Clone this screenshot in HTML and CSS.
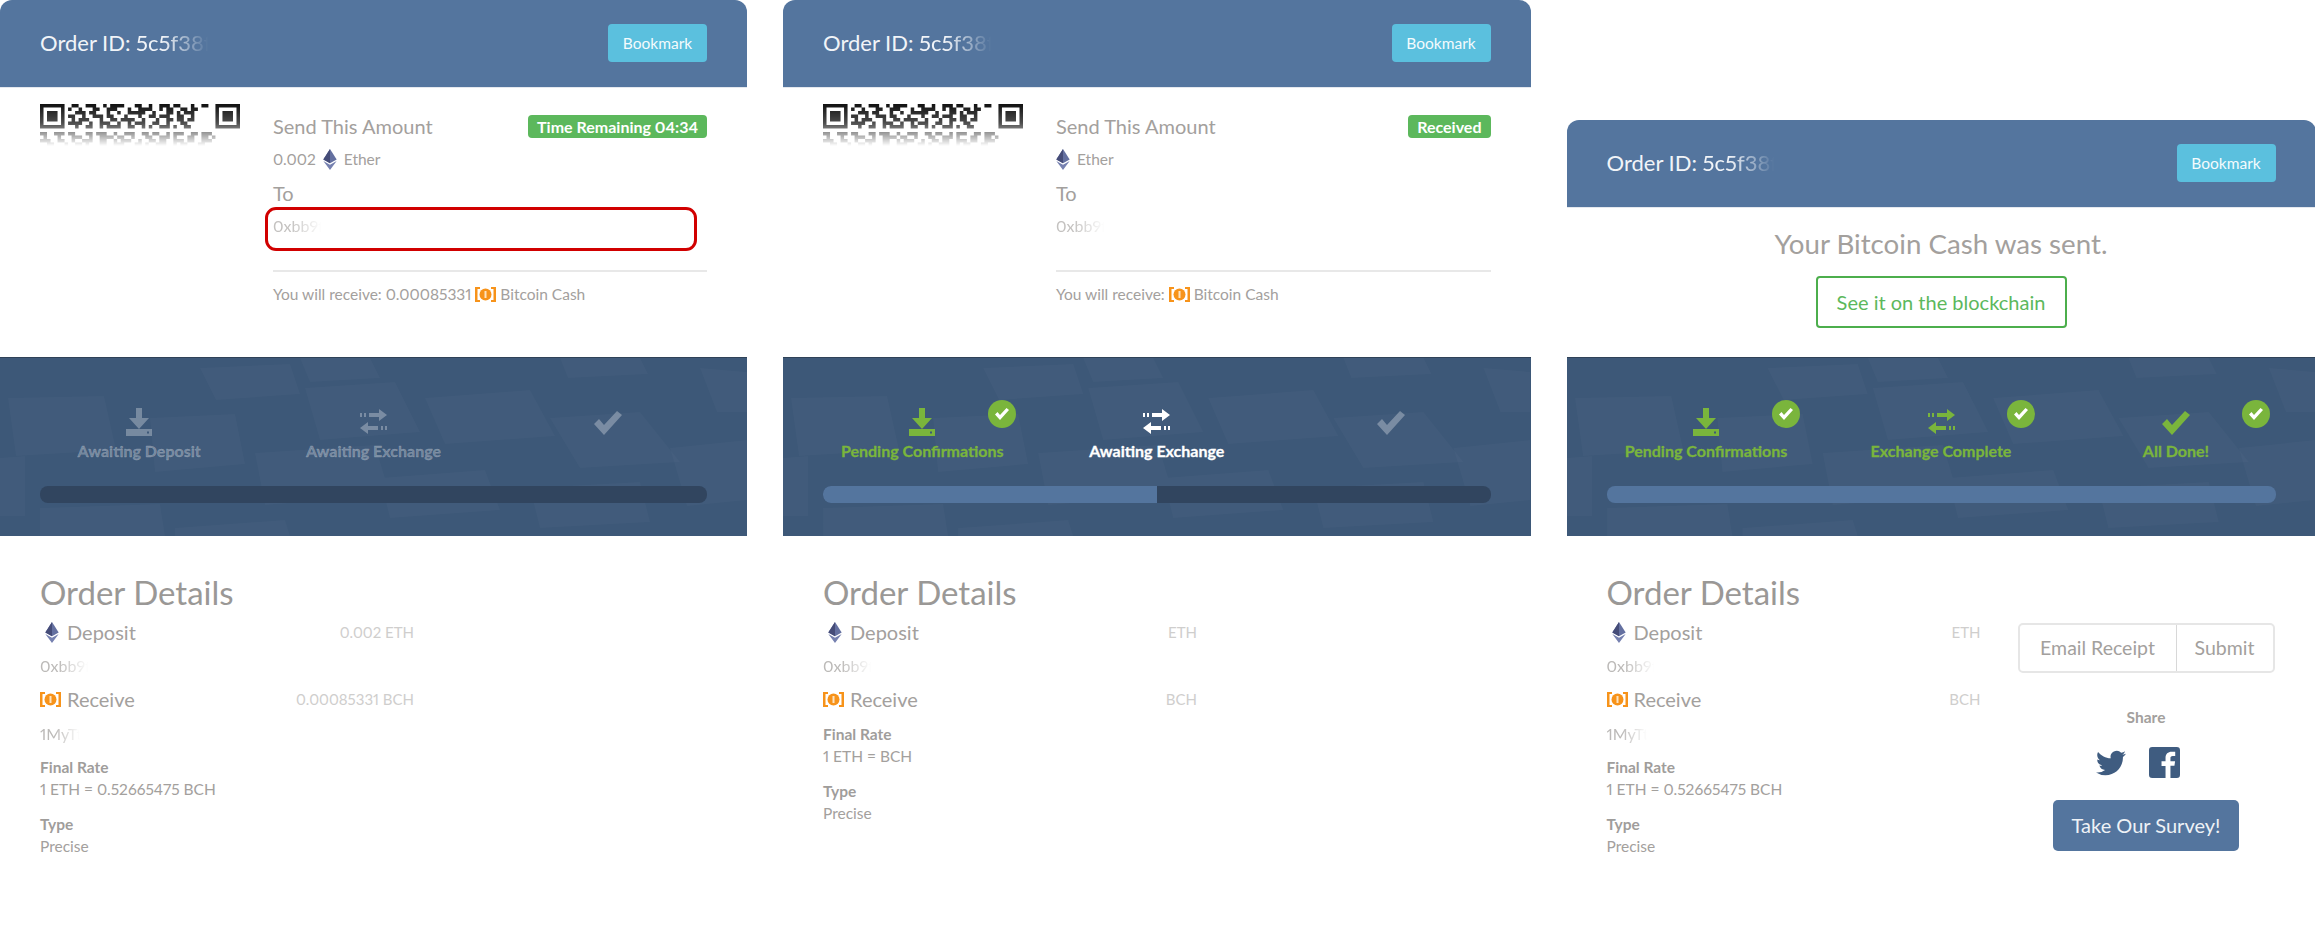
FILE: index.html
```html
<!DOCTYPE html>
<html lang="en">
<head>
  <meta charset="UTF-8">
  <title>Order status</title>
  <link rel="stylesheet" href="styles.css">
</head>
<body>
  <!-- shared icons -->
  <svg class="defs" aria-hidden="true">
    <symbol id="i-download" viewBox="0 0 26 28"><path fill-rule="evenodd" d="M10 0h6v10h7L13 21 3 10h7zM0 21h7l6 0 6 0h7v7H0zM21 23.5h2v2h-2z"/></symbol>
    <symbol id="i-exchange" viewBox="0 0 27 25"><path d="M9 4h10V0l8 6-8 6V8H9zM0 4h2v4H0zM4 4h2v4H4zM18 17H8v-4l-8 6 8 6v-4h10zM21 17h2v4h-2zM25 17h2v4h-2z"/></symbol>
    <symbol id="i-check" viewBox="0 0 28 24"><path d="M0 13l5-5 5 6L23 0l5 4L10 24z"/></symbol>
    <symbol id="i-eth" viewBox="0 0 14 22"><path fill="#6470a0" d="M7 0l7 11-7 4-7-4z"/><path fill="#454c78" d="M7 0v15l-7-4z"/><path fill="#7681b0" d="M0 12.6l7 4 7-4-7 9.4z"/></symbol>
    <symbol id="i-bch" viewBox="0 0 21 15"><path fill="#f7931a" d="M0 0h5v2H2.500v11H5v2H0zM21 0h-5v2h2.500v11H16v2h5z"/><circle cx="10.500" cy="7.500" r="6" fill="#f7931a"/><path fill="#fde3c0" d="M9.500 4h2v7h-2z"/></symbol>
    <symbol id="i-twitter" viewBox="0 0 24 24"><path d="M23.953 4.57a10 10 0 01-2.825.775 4.958 4.958 0 002.163-2.723c-.951.555-2.005.959-3.127 1.184a4.92 4.92 0 00-8.384 4.482C7.69 8.095 4.067 6.13 1.64 3.162a4.822 4.822 0 00-.666 2.475c0 1.71.87 3.213 2.188 4.096a4.904 4.904 0 01-2.228-.616v.06a4.923 4.923 0 003.946 4.827 4.996 4.996 0 01-2.212.085 4.936 4.936 0 004.604 3.417 9.867 9.867 0 01-6.102 2.105c-.39 0-.779-.023-1.17-.067a13.995 13.995 0 007.557 2.209c9.053 0 13.998-7.496 13.998-13.985 0-.21 0-.42-.015-.63A9.935 9.935 0 0024 4.59z"/></symbol>
    <symbol id="i-facebook" viewBox="0 0 24 24"><path d="M21.500 0h-19A2.500 2.500 0 000 2.500v19A2.500 2.500 0 002.500 24h10.300v-9.300H9.700v-3.600h3.100V8.400c0-3.100 1.900-4.800 4.700-4.800 1.300 0 2.500.1 2.800.1v3.200h-1.900c-1.500 0-1.800.7-1.800 1.800v2.300h3.600l-.5 3.600h-3.100V24h4.900a2.500 2.500 0 002.500-2.500v-19A2.500 2.500 0 0021.500 0z"/></symbol>
    <symbol id="i-qr" viewBox="0 0 57 12" preserveAspectRatio="none">
      <path fill="#111" fill-rule="evenodd" d="M0 0h7v7H0zM1 1v5h5V1zM2 2h3v3H2zM50 0h7v7h-7zM51 1v5h5V1zM52 2h3v3h-3z"/>
      <path fill="none" stroke="#111" d="M9 .5h2m2 0h3m2 0h1m1 0h4m3 0h2m2 0h1m2 0h3m1 0h2m3 0h1m2 0h2
        M8 1.500h1m2 0h1m3 0h2m2 0h3m3 0h1m2 0h4m2 0h1m1 0h2m2 0h2m1 0h2
        M10 2.500h3m1 0h2m3 0h1m2 0h1m2 0h5m2 0h1m3 0h2m1 0h1m1 0h3
        M8 3.500h2m2 0h1m2 0h3m1 0h2m3 0h1m3 0h1m2 0h2m1 0h3m2 0h2m2 0h1
        M9 4.500h1m1 0h3m3 0h1m2 0h2m1 0h4m2 0h1m3 0h1m2 0h2m1 0h2m1 0h2
        M8 5.500h4m2 0h1m2 0h3m2 0h1m2 0h1m1 0h3m2 0h2m2 0h1m3 0h2
        M10 6.500h1m2 0h2m2 0h1m1 0h4m2 0h2m2 0h1m1 0h1m2 0h3m1 0h1m2 0h2
        M0 8.500h2m2 0h3m1 0h2m3 0h2m1 0h3m2 0h1m2 0h3m2 0h2m1 0h2m2 0h1m1 0h3m2 0h2m1 0h3
        M1 9.500h1m3 0h1m3 0h3m2 0h1m2 0h4m1 0h2m2 0h1m3 0h2m2 0h3m1 0h1m3 0h2m2 0h2m1 0h1
        M0 10.500h3m2 0h2m2 0h1m2 0h3m2 0h2m2 0h1m1 0h3m2 0h1m2 0h2m1 0h2m2 0h3m1 0h2m2 0h3
        M2 11.500h2m3 0h1m2 0h2m1 0h1m3 0h2m2 0h3m3 0h2m1 0h1m2 0h3m2 0h1m1 0h2m3 0h2"/>
    </symbol>
    <symbol id="i-texture" viewBox="0 0 747 178" preserveAspectRatio="none">
      <path d="M8 40l96-2 12 54-100 6zM200 10l90-4 10 30-84 6zM305 30l90-6 25 50-100 8zM425 40l105-8 25 46-110 8zM550 60l90-6 40 50-100 6zM700 10l47 4v40l-30 0z"/>
      <path d="M150 60l85-4 10 50-90 8zM255 95l120-8 15 50-125 10zM380 120l105-8 15 40-110 8zM530 130l110-6 10 40-110 6zM670 90l77-8v60l-60 6zM0 100l25-2v60H0z"/>
      <path d="M40 150l120-4 5 32H40zM175 170l110-8 5 16H175zM300 0l70 0 10 20-70 4zM560 0l80 0 8 16-80 4z"/>
    </symbol>
  </svg>

  <main class="page">

    <!-- waiting for deposit -->
    <section class="panel">
      <header class="panel-head">
        <span class="order-id">Order ID: <span class="fade">5c5f38f</span></span>
        <a class="btn-bookmark">Bookmark</a>
      </header>
      <div class="pay">
        <div class="qr-col"><svg class="qr"><use href="#i-qr"/></svg></div>
        <div class="pay-info">
          <div class="pay-title">
            <span>Send This Amount</span>
            <span class="badge">Time Remaining 04:34</span>
          </div>
          <div class="pay-amount">0.002 <svg class="ic-eth"><use href="#i-eth"/></svg> Ether</div>
          <div class="pay-to">To</div>
          <div class="pay-addr">
            <span class="fade">0xbb9f</span>
            <div class="callout"></div>
          </div>
          <div class="pay-receive">You will receive: 0.00085331 <svg class="ic-bch"><use href="#i-bch"/></svg> Bitcoin Cash</div>
        </div>
      </div>
      <div class="progress">
        <svg class="texture"><use href="#i-texture"/></svg>
        <div class="steps">
          <div class="step">
            <svg class="step-ic ic-dl"><use href="#i-download"/></svg>
            <span class="step-label">Awaiting Deposit</span>
          </div>
          <div class="step">
            <svg class="step-ic ic-ex"><use href="#i-exchange"/></svg>
            <span class="step-label">Awaiting Exchange</span>
          </div>
          <div class="step">
            <svg class="step-ic ic-ok"><use href="#i-check"/></svg>
          </div>
        </div>
        <div class="bar"></div>
      </div>
      <div class="details">
        <div class="details-main">
          <h2>Order Details</h2>
          <div class="row first"><span class="coin"><svg class="ic-eth"><use href="#i-eth"/></svg>Deposit</span><span class="row-val">0.002 ETH</span></div>
          <div class="addr"><span class="fade">0xbb9f</span></div>
          <div class="row"><span class="coin"><svg class="ic-bch"><use href="#i-bch"/></svg>Receive</span><span class="row-val">0.00085331 BCH</span></div>
          <div class="addr"><span class="fade">1MyTt</span></div>
          <div class="label">Final Rate</div>
          <div class="value">1 ETH = 0.52665475 BCH</div>
          <div class="label type">Type</div>
          <div class="value">Precise</div>
        </div>
      </div>
    </section>

    <!-- deposit received -->
    <section class="panel">
      <header class="panel-head">
        <span class="order-id">Order ID: <span class="fade">5c5f38f</span></span>
        <a class="btn-bookmark">Bookmark</a>
      </header>
      <div class="pay">
        <div class="qr-col"><svg class="qr"><use href="#i-qr"/></svg></div>
        <div class="pay-info">
          <div class="pay-title">
            <span>Send This Amount</span>
            <span class="badge">Received</span>
          </div>
          <div class="pay-amount"><svg class="ic-eth"><use href="#i-eth"/></svg> Ether</div>
          <div class="pay-to">To</div>
          <div class="pay-addr"><span class="fade">0xbb9f</span></div>
          <div class="pay-receive">You will receive: <svg class="ic-bch"><use href="#i-bch"/></svg> Bitcoin Cash</div>
        </div>
      </div>
      <div class="progress">
        <svg class="texture"><use href="#i-texture"/></svg>
        <div class="steps">
          <div class="step done">
            <svg class="step-ic ic-dl"><use href="#i-download"/></svg>
            <span class="step-label">Pending Confirmations</span>
            <span class="tick"><svg><use href="#i-check"/></svg></span>
          </div>
          <div class="step active">
            <svg class="step-ic ic-ex"><use href="#i-exchange"/></svg>
            <span class="step-label">Awaiting Exchange</span>
          </div>
          <div class="step">
            <svg class="step-ic ic-ok"><use href="#i-check"/></svg>
          </div>
        </div>
        <div class="bar"><div class="bar-fill half"></div></div>
      </div>
      <div class="details">
        <div class="details-main">
          <h2>Order Details</h2>
          <div class="row first"><span class="coin"><svg class="ic-eth"><use href="#i-eth"/></svg>Deposit</span><span class="row-val">ETH</span></div>
          <div class="addr"><span class="fade">0xbb9f</span></div>
          <div class="row"><span class="coin"><svg class="ic-bch"><use href="#i-bch"/></svg>Receive</span><span class="row-val">BCH</span></div>
          <div class="label">Final Rate</div>
          <div class="value">1 ETH = BCH</div>
          <div class="label type">Type</div>
          <div class="value">Precise</div>
        </div>
      </div>
    </section>

    <!-- finished -->
    <section class="panel panel-done">
      <header class="panel-head">
        <span class="order-id">Order ID: <span class="fade">5c5f38f</span></span>
        <a class="btn-bookmark">Bookmark</a>
      </header>
      <div class="sent">
        <p class="sent-text">Your Bitcoin Cash was sent.</p>
        <a class="btn-chain">See it on the blockchain</a>
      </div>
      <div class="progress">
        <svg class="texture"><use href="#i-texture"/></svg>
        <div class="steps">
          <div class="step done">
            <svg class="step-ic ic-dl"><use href="#i-download"/></svg>
            <span class="step-label">Pending Confirmations</span>
            <span class="tick"><svg><use href="#i-check"/></svg></span>
          </div>
          <div class="step done">
            <svg class="step-ic ic-ex"><use href="#i-exchange"/></svg>
            <span class="step-label">Exchange Complete</span>
            <span class="tick"><svg><use href="#i-check"/></svg></span>
          </div>
          <div class="step done">
            <svg class="step-ic ic-ok"><use href="#i-check"/></svg>
            <span class="step-label">All Done!</span>
            <span class="tick"><svg><use href="#i-check"/></svg></span>
          </div>
        </div>
        <div class="bar"><div class="bar-fill full"></div></div>
      </div>
      <div class="details">
        <div class="details-main">
          <h2>Order Details</h2>
          <div class="row first"><span class="coin"><svg class="ic-eth"><use href="#i-eth"/></svg>Deposit</span><span class="row-val">ETH</span></div>
          <div class="addr"><span class="fade">0xbb9f</span></div>
          <div class="row"><span class="coin"><svg class="ic-bch"><use href="#i-bch"/></svg>Receive</span><span class="row-val">BCH</span></div>
          <div class="addr"><span class="fade">1MyTt</span></div>
          <div class="label">Final Rate</div>
          <div class="value">1 ETH = 0.52665475 BCH</div>
          <div class="label type">Type</div>
          <div class="value">Precise</div>
        </div>
        <aside class="details-side">
          <div class="email-group">
            <span class="email-input">Email Receipt</span>
            <span class="email-submit">Submit</span>
          </div>
          <div class="share-title">Share</div>
          <div class="share-icons">
            <svg class="ic-tw"><use href="#i-twitter"/></svg>
            <svg class="ic-fb"><use href="#i-facebook"/></svg>
          </div>
          <a class="btn-survey">Take Our Survey!</a>
        </aside>
      </div>
    </section>

  </main>
</body>
</html>
```

FILE: styles.css
```css
/* Page */
body {
  margin: 0;
  background: #fff;
  color: #a3a09d;
  font-family: "Lato", "Open Sans", sans-serif;
  font-variant-numeric: proportional-nums;
  overflow: hidden;
}

.defs {
  display: none;
}

.page {
  display: grid;
  grid-template-columns: 747px 747.500px 749px;
  column-gap: 36px;
  width: 2315px;
}

.panel {
  display: flex;
  flex-direction: column;
}

.panel-done {
  margin-top: 120px;
}

/* Header */
.panel-head {
  display: flex;
  align-items: center;
  justify-content: space-between;
  height: 88px;
  padding: 0 40px 2px;
  box-sizing: border-box;
  background: #54759e;
  border-radius: 12px 12px 0 0;
  border-bottom: 1px solid #e4e8ee;
}

.order-id {
  color: #f1f4f8;
  font-size: 22px;
}

.fade {
  display: inline-block;
  -webkit-mask-image: linear-gradient(to right, #000 35%, transparent 95%);
  mask-image: linear-gradient(to right, #000 35%, transparent 95%);
}

.btn-bookmark {
  width: 99px;
  height: 38px;
  line-height: 38px;
  text-align: center;
  background: #5bc0de;
  border-radius: 4px;
  color: #f4fbfd;
  font-size: 15.500px;
}

/* Payment block */
.pay {
  display: flex;
  height: 269px;
  padding: 0 40px;
  box-sizing: border-box;
}

.qr-col {
  width: 233px;
  flex: none;
  padding-top: 16px;
}

.qr {
  display: block;
  width: 200px;
  height: 42px;
  filter: blur(0.7px);
  -webkit-mask-image: linear-gradient(to bottom, #000, rgba(0, 0, 0, 0.75) 45%, transparent 100%);
  mask-image: linear-gradient(to bottom, #000, rgba(0, 0, 0, 0.75) 45%, transparent 100%);
}

.pay-info {
  flex: 1;
  padding-top: 26px;
}

.pay-title {
  display: flex;
  align-items: center;
  justify-content: space-between;
  height: 24px;
  font-size: 20px;
}

.badge {
  padding: 0 9px;
  height: 23px;
  line-height: 23px;
  background: #5cb85c;
  border-radius: 4px;
  color: #fff;
  font-size: 16px;
  font-weight: 700;
}

.pay-amount {
  display: flex;
  align-items: center;
  gap: 7px;
  height: 24px;
  margin-top: 9px;
  font-size: 15.500px;
}

.ic-eth {
  width: 14px;
  height: 21px;
  flex: none;
}

.ic-bch {
  width: 21px;
  height: 15px;
  flex: none;
  vertical-align: -2px;
}

.pay-to {
  height: 24px;
  margin-top: 10px;
  font-size: 20px;
}

.pay-addr {
  position: relative;
  height: 24px;
  line-height: 24px;
  margin-top: 9px;
  font-size: 16px;
  color: #c4c2c0;
}

.callout {
  position: absolute;
  left: -8px;
  right: 10px;
  top: -7px;
  height: 44px;
  box-sizing: border-box;
  border: 3.500px solid #d10000;
  border-radius: 11px;
}

.pay-receive {
  margin-top: 32px;
  padding-top: 12px;
  border-top: 2px solid #e8e8e8;
  height: 20px;
  line-height: 20px;
  font-size: 15.500px;
}

/* Final page message */
.sent {
  display: flex;
  flex-direction: column;
  align-items: center;
  height: 149px;
}

.sent-text {
  margin: 19px 0 0;
  height: 34px;
  line-height: 34px;
  font-size: 27.700px;
}

.btn-chain {
  width: 251px;
  height: 52px;
  line-height: 48px;
  margin-top: 15px;
  box-sizing: border-box;
  text-align: center;
  border: 2px solid #4cae4c;
  border-radius: 4px;
  color: #5cb85c;
  font-size: 20px;
}

/* Progress band */
.progress {
  position: relative;
  height: 179px;
  background: #3d5878;
  overflow: hidden;
  border-top: 1px solid #2f4258;
  box-sizing: border-box;
}

.texture {
  position: absolute;
  inset: 0;
  width: 100%;
  height: 100%;
  fill: #fff;
  fill-opacity: 0.025;
}

.steps {
  position: relative;
  display: grid;
  grid-template-columns: repeat(3, 1fr);
  height: 128px;
  margin: 0 22px;
}

.step {
  position: relative;
  display: flex;
  flex-direction: column;
  align-items: center;
  color: rgba(255, 255, 255, 0.3);
  fill: rgba(255, 255, 255, 0.3);
}

.step.done {
  color: #7ab53c;
  fill: #7ab53c;
}

.step.active {
  color: #fff;
  fill: #fff;
}

.step-ic {
  position: absolute;
}

.ic-dl {
  top: 50px;
  width: 26px;
  height: 28px;
}

.ic-ex {
  top: 51px;
  width: 27px;
  height: 25px;
}

.ic-ok {
  top: 53px;
  width: 28px;
  height: 24px;
}

.step-label {
  margin-top: 83px;
  height: 20px;
  line-height: 20px;
  font-size: 16px;
  font-weight: 700;
  -webkit-text-stroke: 0.3px currentColor;
  white-space: nowrap;
}

.tick {
  position: absolute;
  top: 42px;
  right: 24px;
  display: flex;
  align-items: center;
  justify-content: center;
  width: 28px;
  height: 28px;
  background: #7ab53c;
  border-radius: 50%;
}

.tick svg {
  width: 14px;
  height: 12px;
  fill: #fff;
}

.bar {
  position: relative;
  height: 17px;
  margin: 0 40px;
  background: #31455f;
  border-radius: 8px;
  overflow: hidden;
}

.bar-fill {
  height: 100%;
  background: #54759e;
}

.half {
  width: 50%;
}

.full {
  width: 100%;
}

/* Order details */
.details {
  display: flex;
  padding: 37px 0 0 40px;
}

.details-main {
  width: 374px;
  flex: none;
}

.details h2 {
  margin: 0;
  height: 38px;
  line-height: 38px;
  font-size: 33px;
  font-weight: 400;
  color: #9a9896;
}

.row {
  display: flex;
  align-items: center;
  justify-content: space-between;
  height: 24px;
  margin-top: 11px;
}

.row.first {
  margin-top: 9px;
}

.coin {
  display: flex;
  align-items: center;
  gap: 6px;
  font-size: 20px;
}

.coin .ic-eth {
  margin-left: 5px;
  margin-right: 2px;
}

.row-val {
  font-size: 15px;
  color: #cfcecd;
}

.addr {
  height: 20px;
  line-height: 20px;
  margin-top: 12px;
  font-size: 16px;
  color: #bcbab8;
}

.row + .addr {
  margin-top: 13px;
}

.row.first + .addr {
  margin-top: 12px;
}

.label {
  height: 20px;
  line-height: 20px;
  margin-top: 13px;
  font-size: 15.500px;
  font-weight: 700;
  color: #9f9d9b;
}

.label.type {
  margin-top: 15px;
}

.value {
  height: 20px;
  line-height: 20px;
  margin-top: 2px;
  font-size: 15.500px;
}

/* Right column on the final page */
.details-side {
  display: flex;
  flex-direction: column;
  align-items: center;
  width: 257px;
  margin-left: 37px;
  padding-top: 50px;
}

.email-group {
  display: flex;
  width: 100%;
  height: 50px;
  box-sizing: border-box;
  border: 2px solid #e6e6e6;
  border-radius: 5px;
  line-height: 46px;
  font-size: 19.500px;
}

.email-input {
  width: 156px;
  text-align: center;
  border-right: 1px solid #d8d8d8;
}

.email-submit {
  flex: 1;
  text-align: center;
}

.share-title {
  margin-top: 34px;
  height: 20px;
  line-height: 20px;
  font-size: 15.500px;
  font-weight: 700;
}

.share-icons {
  display: flex;
  align-items: center;
  gap: 23px;
  margin-top: 20px;
  padding-right: 16px;
  fill: #3f5c80;
}

.ic-tw {
  width: 30px;
  height: 30px;
}

.ic-fb {
  width: 31px;
  height: 31px;
}

.btn-survey {
  width: 186px;
  height: 51px;
  line-height: 51px;
  margin-top: 22px;
  text-align: center;
  background: #54759e;
  border-radius: 5px;
  color: #eef2f6;
  font-size: 20px;
}
```
